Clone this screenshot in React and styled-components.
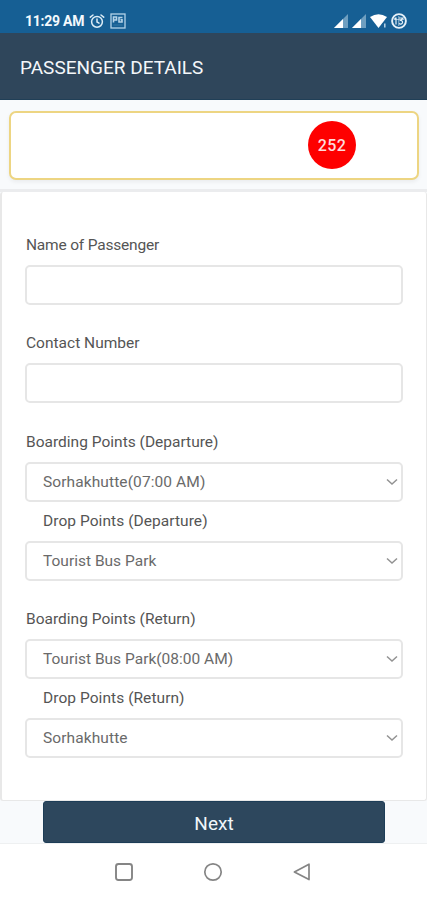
import React from 'react'
import styled, { createGlobalStyle } from 'styled-components'

export default function PassengerDetails() {
  return (
    <>
      <GlobalStyle />
      <Screen>
        <StatusBar>
          <Group $gap="5px">
            <Time>11:29 AM</Time>
            <AlarmIcon />
            <PgIcon />
          </Group>
          <Group>
            <SignalIcon />
            <SignalIcon />
            <WifiIcon />
            <BatteryIcon />
          </Group>
        </StatusBar>

        <Header>
          <Title>PASSENGER DETAILS</Title>
        </Header>

        <Summary>
          <Ticket>
            <Seat>252</Seat>
          </Ticket>
        </Summary>

        <Form>
          <Fieldset>
            <Label $space="-0.19px">Name of Passenger</Label>
            <Input />
          </Fieldset>
          <Fieldset>
            <Label>Contact Number</Label>
            <Input />
          </Fieldset>
          <Fieldset>
            <Label>Boarding Points (Departure)</Label>
            <Select value="Sorhakhutte(07:00 AM)" space="0.1px" />
            <Label $indent $space="0.06px">Drop Points (Departure)</Label>
            <Select value="Tourist Bus Park" />
          </Fieldset>
          <Fieldset>
            <Label>Boarding Points (Return)</Label>
            <Select value="Tourist Bus Park(08:00 AM)" />
            <Label $indent $space="0.06px">Drop Points (Return)</Label>
            <Select value="Sorhakhutte" space="0.1px" />
          </Fieldset>
        </Form>

        <Footer>
          <NextButton>Next</NextButton>
        </Footer>

        <NavBar>
          <svg width="20" height="20" viewBox="0 0 20 20" fill="none" stroke="#858585" strokeWidth="1.9">
            <rect x="2" y="2" width="16" height="16" rx="2.5" />
          </svg>
          <svg width="20" height="20" viewBox="0 0 20 20" fill="none" stroke="#858585" strokeWidth="1.7">
            <circle cx="10" cy="10" r="8.2" />
          </svg>
          <svg width="20" height="20" viewBox="0 0 20 20" fill="none" stroke="#858585" strokeWidth="1.7" strokeLinejoin="round">
            <path d="M17 2.2 V17.6 L2.4 9.9 Z" />
          </svg>
        </NavBar>
      </Screen>
    </>
  )
}

function Select({ value, space }) {
  return (
    <SelectBox $space={space}>
      <span>{value}</span>
      <svg width="12" height="8" viewBox="0 0 12 8" fill="none" stroke="#929292" strokeWidth="1.5">
        <path d="M1 1.5 L6 6 L11 1.5" />
      </svg>
    </SelectBox>
  )
}

function AlarmIcon() {
  return (
    <svg width="16" height="16" viewBox="0 0 16 16" fill="none" stroke="#dcecf6" strokeWidth="1.5" strokeLinecap="round">
      <circle cx="8" cy="8.8" r="5.4" />
      <path d="M1.3 4.2 L4 2 M12 2 L14.7 4.2 M8 6 V9 L10 10.2" />
    </svg>
  )
}

function PgIcon() {
  return (
    <svg width="16" height="16" viewBox="0 0 16 16" fill="none" stroke="#b4d3e8">
      <rect x="1" y="1" width="14" height="14" strokeWidth="1.3" />
      <path d="M3.5 9.5 V4 H6.5 V7 H3.8 M12.5 4.5 H9 V9 H12 V6.8 H10.5" strokeWidth="1.6" />
      <path d="M3.5 12 H12.5" strokeWidth="0.7" opacity="0.3" />
    </svg>
  )
}

function SignalIcon() {
  return (
    <svg width="14" height="14" viewBox="0 0 14 14">
      <path d="M0 14 L14 0 V14 Z" fill="#6f9fc0" />
      <path d="M0 14 L9 5 V14 Z" fill="#fff" />
    </svg>
  )
}

function WifiIcon() {
  return (
    <svg width="17" height="14" viewBox="0 0 17 14">
      <path d="M0 3 Q8.5 -2.6 17 3 L8.5 14 Z" fill="#fff" />
      <path d="M12.5 9 H17 V14 H12.5 Z" fill="#165f94" />
      <path d="M14.8 9.5 V13.5" stroke="#b9d4e6" strokeWidth="1.5" />
    </svg>
  )
}

function BatteryIcon() {
  return (
    <svg width="16" height="16" viewBox="0 0 16 16" fill="none" stroke="#e6f1f8">
      <circle cx="8" cy="8" r="6.9" strokeWidth="1.9" />
      <path d="M5 4.5 V11.5 M3.5 6 L5 4.8 M8 5 H12 L9.6 7.5 Q12 7.6 11.5 9.8 Q10 12 8 10.6" strokeWidth="1.2" />
      <path d="M7.8 3 V13 M3 6.5 H13" strokeWidth="0.9" opacity="0.7" />
    </svg>
  )
}

const GlobalStyle = createGlobalStyle`
  * {
    box-sizing: border-box;
  }
  body {
    margin: 0;
    background: #fff;
    font-family: Roboto, 'Noto Sans', sans-serif;
  }
`
const Screen = styled.div`
  display: flex;
  flex-direction: column;
  width: 427px;
  height: 900px;
  overflow: hidden;
  background: #f8fafc;
`
const StatusBar = styled.div`
  display: flex;
  justify-content: space-between;
  flex: none;
  height: 33px;
  padding: 9px 20px 0 25px;
  background: #165f94;
`
const Group = styled.div`
  display: flex;
  align-items: center;
  gap: ${(p) => p.$gap || '4px'};
  height: 24px;
`
const Time = styled.span`
  width: 59px;
  font-size: 14px;
  font-weight: 700;
  letter-spacing: -0.25px;
  white-space: nowrap;
  color: #f3f9fd;
`
const Header = styled.header`
  display: flex;
  align-items: center;
  flex: none;
  height: 67px;
  padding: 2px 20px 0;
  background: #2f465b;
  border-bottom: 1px solid #203f57;
`
const Title = styled.h1`
  margin: 0;
  font-size: 19px;
  font-weight: 400;
  color: #f4f7fa;
`
const Summary = styled.div`
  flex: none;
  height: 92px;
  padding: 11px 8px 0 9px;
  border-bottom: 3px solid #ebecee;
`
const Ticket = styled.div`
  display: flex;
  align-items: center;
  justify-content: flex-end;
  height: 69px;
  padding: 0 61px 1px 0;
  background: #fff;
  border: 2px solid #edd582;
  border-radius: 7px;
  box-shadow: 0 2px 4px rgba(0, 0, 0, 0.06);
`
const Seat = styled.div`
  display: flex;
  align-items: center;
  justify-content: center;
  width: 48px;
  height: 48px;
  border-radius: 50%;
  background: #fe0000;
  color: #ffdcdc;
  font-size: 16px;
  font-weight: 500;
  letter-spacing: 0.4px;
`
const Form = styled.div`
  flex: none;
  height: 609px;
  padding: 33.5px 23px 0;
  background: #fff;
  border: solid #e8e8e8;
  border-width: 0 1px 1px 2px;
  border-radius: 3px;
`
const Fieldset = styled.div`
  & + & {
    margin-top: 19.5px;
  }
`
const Label = styled.div`
  height: 39px;
  padding-left: ${(p) => (p.$indent ? '18px' : '1px')};
  font-size: 15.5px;
  line-height: 39px;
  letter-spacing: ${(p) => p.$space || '0.01px'};
  color: #555;
`
const Input = styled.input`
  display: block;
  width: 100%;
  height: 40px;
  padding: 0 16px;
  background: #fff;
  border: 2px solid #e6e6e6;
  border-radius: 5px;
  outline: none;
`
const SelectBox = styled.div`
  display: flex;
  align-items: center;
  justify-content: space-between;
  height: 40px;
  padding: 0 3px 0 16px;
  border: 2px solid #e6e6e6;
  border-radius: 5px;
  font-size: 15.5px;
  letter-spacing: ${(p) => p.$space || '0.01px'};
  color: #6a6a6a;
`
const Footer = styled.div`
  flex: none;
  height: 43px;
  padding: 0 42px 0 43px;
  border-bottom: 1px solid #eef0f1;
`
const NextButton = styled.button`
  display: block;
  width: 100%;
  height: 42px;
  padding: 2px 0 0;
  border: 1px solid #1d3d57;
  border-radius: 3px;
  background: #2d475d;
  color: #f1f6fa;
  font-family: inherit;
  font-size: 19px;
`
const NavBar = styled.div`
  display: flex;
  justify-content: center;
  gap: 69px;
  flex: 1;
  padding: 18px 1px 0 0;
  background: #fff;
`
